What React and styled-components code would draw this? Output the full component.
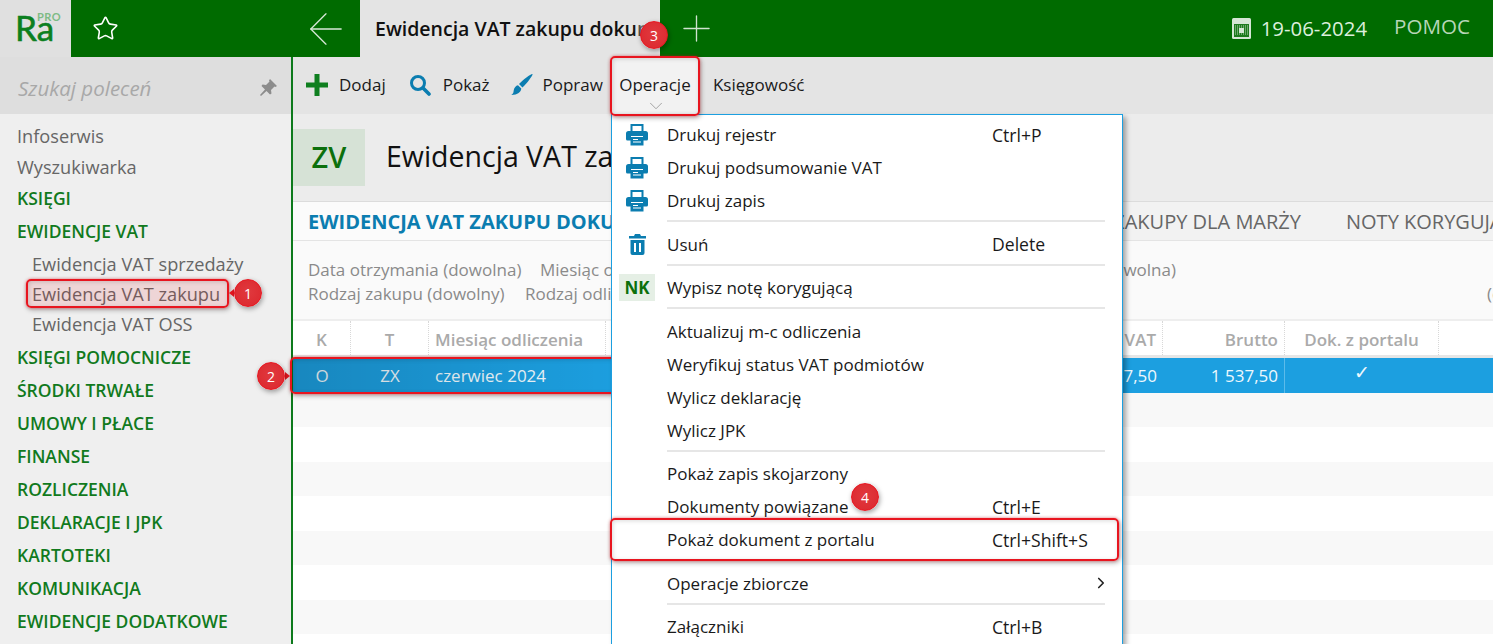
import React from "react";
import styled, { createGlobalStyle } from "styled-components";
import { ArrowLeft, Plus, Star, ChevronDown, ChevronRight } from "lucide-react";

const FONT = `"Open Sans", "Noto Sans", sans-serif`;
const GREEN = "#006b00";
const BLUE = "#0b7db0";
const RED = "#e8151f";
const COLS = "58px 78px 177px 557px 122px 154px 1fr";

const GlobalStyle = createGlobalStyle`
  html, body { margin: 0; padding: 0; background: #fff; }
  body { font-family: ${FONT}; overflow: hidden; }
  * { box-sizing: border-box; }
`;

const Page = styled.div`
  position: relative;
  width: 1493px;
  height: 644px;
  overflow: hidden;
`;

const TopBar = styled.header`
  display: flex;
  align-items: center;
  height: 57px;
  background: ${GREEN};
`;
const LogoCell = styled.div`
  position: relative;
  width: 71px;
  height: 57px;
  background: #e0e0e0;
`;
const LogoRa = styled.span`
  position: absolute;
  left: 15px;
  top: 7px;
  font-family: "Lato", sans-serif;
  font-size: 35px;
  line-height: 40px;
  letter-spacing: 0.2px;
  color: #0c7f1f;
  -webkit-text-stroke: 0.6px #0c7f1f;
`;
const LogoPro = styled.span`
  position: absolute;
  left: 37px;
  top: 12px;
  font-family: "Lato", sans-serif;
  font-size: 11px;
  line-height: 10px;
  font-weight: 700;
  letter-spacing: 0.5px;
  color: #7dbb85;
`;
const FavCell = styled.div`
  display: flex;
  align-items: center;
  width: 229px;
  padding-left: 21px;
  color: #fff;
`;
const BackCell = styled.div`
  display: flex;
  align-items: center;
  justify-content: center;
  width: 60px;
  padding-right: 8px;
  color: #d8e8d8;
`;
const ActiveTab = styled.div`
  position: relative;
  display: flex;
  align-items: center;
  width: 300px;
  height: 57px;
  padding: 0 0 1px 15px;
  background: #e4e4e4;
  overflow: hidden;
  white-space: nowrap;
  font-size: 19.5px;
  font-weight: 600;
  color: #111;
  &::after {
    content: "";
    position: absolute;
    right: 0;
    top: 0;
    bottom: 0;
    width: 26px;
    background: linear-gradient(90deg, rgba(228, 228, 228, 0), #e4e4e4 70%);
  }
`;
const AddCell = styled.div`
  display: flex;
  align-items: center;
  padding-left: 15px;
  color: #cfe3cf;
`;
const TopRight = styled.div`
  display: flex;
  align-items: center;
  margin-left: auto;
  padding-right: 23px;
  padding-bottom: 1px;
`;
const DateText = styled.span`
  margin-left: 10px;
  font-size: 20.4px;
  color: #dcefdc;
`;
const HelpText = styled.span`
  margin-left: 27px;
  padding-bottom: 4px;
  font-size: 20.6px;
  color: #b7d6b7;
`;

const Body = styled.div`
  display: grid;
  grid-template-columns: 293px 1fr;
  height: 587px;
`;

const Sidebar = styled.aside`
  background: #efefef;
  border-right: 2px solid #0d7a1c;
`;
const SearchBar = styled.div`
  display: flex;
  align-items: center;
  justify-content: space-between;
  height: 57px;
  padding: 4px 14px 0 18px;
  background: #dedede;
  font-size: 20.5px;
  font-style: italic;
  color: #a8a8a8;
`;
const Nav = styled.nav`
  padding-top: 6.5px;
`;
const NavLink = styled.div`
  display: flex;
  align-items: center;
  height: ${(p) => (p.$sub ? 30 : p.$group ? 33 : 31)}px;
  padding-left: ${(p) => (p.$sub ? 32 : 17)}px;
  padding-bottom: ${(p) => (p.$group ? 2 : 0)}px;
  font-size: ${(p) => (p.$group ? 17.5 : 18.2)}px;
  font-weight: ${(p) => (p.$group ? 600 : 400)};
  color: ${(p) => (p.$group ? "#117a1d" : "#666")};
`;
const SubGroup = styled.div`
  margin-bottom: 3px;
`;

const Main = styled.main`
  position: relative;
  overflow: hidden;
  background: #fff;
`;
const Toolbar = styled.div`
  display: flex;
  align-items: center;
  height: 57px;
  padding-left: 13px;
  background: #e4e4e4;
`;
const ToolButton = styled.div`
  display: flex;
  align-items: center;
  gap: ${(p) => p.$iconGap ?? 11}px;
  margin-right: ${(p) => p.$gap ?? 21}px;
  padding-bottom: 2px;
  font-size: 17px;
  color: #1a1a1a;
`;
const ToolMenuButton = styled.div`
  position: relative;
  flex-shrink: 0;
  width: 88px;
  height: 57px;
  margin-right: 14px;
  padding-bottom: 2px;
  display: flex;
  align-items: center;
  justify-content: center;
  background: #f2f2f2;
  font-size: 17px;
  color: #1a1a1a;
`;
const ToolChevron = styled.span`
  position: absolute;
  display: flex;
  left: 34px;
  bottom: -3px;
  color: #888;
`;
const TitleRow = styled.div`
  display: flex;
  align-items: center;
  gap: 21px;
  height: 88px;
  background: #ececec;
  border-bottom: 1px solid #dcdcdc;
`;
const Badge = styled.div`
  display: flex;
  align-items: center;
  justify-content: center;
  width: 72px;
  height: 57px;
  padding-bottom: 2px;
  background: #d6e2d6;
  color: #0c700c;
  font-size: 29px;
  font-weight: 600;
`;
const PageTitle = styled.h1`
  margin: 0 0 4px;
  font-size: 28.5px;
  font-weight: 400;
  color: #111;
  white-space: nowrap;
`;
const TabsRow = styled.div`
  display: grid;
  grid-template-columns: 748px 200px auto;
  column-gap: 45px;
  align-items: center;
  height: 39px;
  padding-left: 15px;
  background: linear-gradient(90deg, #fbfbfb 0 600px, #f2f2f2 600px);
  border-bottom: 1px solid #e4e4e4;
  white-space: nowrap;
  overflow: hidden;
`;
const TabLabel = styled.span`
  font-size: 20px;
  font-weight: ${(p) => (p.$active ? 700 : 400)};
  color: ${(p) => (p.$active ? BLUE : "#666")};
  text-align: ${(p) => (p.$end ? "right" : "left")};
`;
const Filters = styled.div`
  height: 80px;
  padding: 16px 0 0 15px;
  background: #fafafa;
  border-bottom: 2px solid #eeeeee;
`;
const FilterLine = styled.div`
  display: grid;
  grid-template-columns: ${(p) => p.$cols};
  height: 24px;
  align-items: center;
  font-size: 17px;
  color: #8a8a8a;
  white-space: nowrap;
  overflow: hidden;
`;
const FilterRight = styled.span`
  text-align: right;
`;
const Row = styled.div`
  display: grid;
  grid-template-columns: ${COLS};
  align-items: center;
  height: ${(p) => (p.$head ? 37 : 34.5)}px;
  background: ${(p) => (p.$selected ? "#1c9fe0" : p.$odd ? "#f8f8f8" : "#fff")};
  border-bottom: ${(p) => (p.$head ? "3px solid #e6e6e6" : "none")};
  color: ${(p) => (p.$selected ? "#eef8fd" : "#aaa")};
  font-size: 17px;
  font-weight: ${(p) => (p.$head ? 600 : 400)};
  white-space: nowrap;
`;
const Cell = styled.div`
  display: flex;
  align-items: center;
  height: 100%;
  padding: ${(p) => (p.$head ? "2px 6px 0" : "1px 6px 0")};
  justify-content: ${(p) => (p.$align === "center" ? "center" : p.$align === "right" ? "flex-end" : "flex-start")};
  border-right: ${(p) =>
    p.$head ? "1px dotted #d8d8d8" : p.$selected ? "1px solid #5cbbea" : "none"};
`;
const Tick = styled.span`
  font-family: "DejaVu Sans", sans-serif;
  font-size: 19px;
  margin-top: -7px;
`;

const Dropdown = styled.div`
  position: absolute;
  z-index: 2;
  left: 318px;
  top: 57px;
  width: 512px;
  height: 560px;
  padding-top: 3px;
  background: #fff;
  border: 1px solid #1c9fe0;
  box-shadow: 3px 3px 5px rgba(0, 0, 0, 0.35);
`;
const MenuItem = styled.div`
  display: grid;
  grid-template-columns: 55px 325px 1fr;
  align-items: center;
  height: 33px;
  padding-right: 16px;
  font-size: 17px;
  color: #1a1a1a;
  white-space: nowrap;
`;
const MenuIcon = styled.span`
  display: flex;
  justify-content: center;
  margin-left: 7px;
  width: 36px;
`;
const MenuNote = styled.span`
  display: flex;
  align-items: center;
  justify-content: center;
  width: 36px;
  height: 27px;
  margin-left: 7px;
  background: #e5efe5;
  color: #0c700c;
  font-size: 17px;
  font-weight: 700;
`;
const Shortcut = styled.span`
  font-size: 17.6px;
`;
const MenuArrow = styled.span`
  display: flex;
  justify-content: flex-end;
  margin-right: -4px;
  color: #222;
`;
const MenuRule = styled.div`
  height: 2px;
  margin: 3px 17px 5.5px 55px;
  background: #e6e6e6;
`;

const Outline = styled.div`
  position: absolute;
  z-index: ${(p) => (p.$under ? 1 : 3)};
  left: ${(p) => p.$x}px;
  top: ${(p) => p.$y}px;
  width: ${(p) => p.$w}px;
  height: ${(p) => p.$h}px;
  border: 2px solid ${RED};
  border-radius: 5px;
  background: ${(p) => p.$fill || "transparent"};
  box-shadow: 0 0 3px rgba(232, 21, 31, 0.5), 1px 2px 5px rgba(0, 0, 0, 0.3),
    inset 1px 1px 4px rgba(0, 0, 0, 0.15);
  pointer-events: none;
`;
const Marker = styled.div`
  position: absolute;
  z-index: 3;
  left: ${(p) => p.$x - 14}px;
  top: ${(p) => p.$y - 14}px;
  width: 28px;
  height: 28px;
  display: flex;
  align-items: center;
  justify-content: center;
  border-radius: 50%;
  border: 1.5px solid ${RED};
  background: radial-gradient(circle at 50% 45%, #e0393e, #dc272d);
  box-shadow: 1px 2px 5px rgba(0, 0, 0, 0.35);
  color: #fff;
  font-size: 14px;
`;
const MarkerTail = styled.span`
  position: absolute;
  z-index: 3;
  left: ${(p) => p.$x}px;
  top: ${(p) => p.$y - 4}px;
  width: 0;
  height: 0;
  border-top: 4px solid transparent;
  border-bottom: 4px solid transparent;
  border-${(p) => (p.$dir === "left" ? "right" : "left")}: 5px solid ${RED};
`;

const AddIcon = () => (
  <svg width="22" height="22" viewBox="0 0 22 22" fill="#0f7f1f">
    <path d="M8.500 0h5v8.500H22v5h-8.500V22h-5v-8.500H0v-5h8.500z" />
  </svg>
);
const PrinterIcon = () => (
  <svg width="22" height="22" viewBox="0 0 22 22" fill="#0b7db0">
    <path d="M4.500 0h13v8h-2V2h-9v6h-2z" />
    <path d="M2.500 7h17A2.500 2.500 0 0 1 22 9.500V15a1.500 1.500 0 0 1-1.500 1.500H17V12H5v4.500H1.500A1.500 1.500 0 0 1 0 15V9.500A2.500 2.500 0 0 1 2.500 7z" />
    <path d="M4.500 13h13v8.500h-13z" />
    <path d="M7 15h5v1H7zM7 17.500h8v1H7z" fill="#fff" />
  </svg>
);
const TrashIcon = () => (
  <svg width="19" height="22" viewBox="0 0 19 22" fill="#0b7db0">
    <path d="M1 3h5l1-2h5l1 2h5v2.500H1z" />
    <path d="M2.500 7h14v13a2 2 0 0 1-2 2h-10a2 2 0 0 1-2-2z" />
    <path d="M6 10h2v9H6zM11 10h2v9h-2z" fill="#fff" />
  </svg>
);
const SearchIcon = () => (
  <svg width="22" height="22" viewBox="0 0 22 22" fill="none" stroke="#0b7db0">
    <circle cx="9" cy="9" r="6.500" strokeWidth="3" />
    <path d="M14 14l6 6" strokeWidth="3.600" strokeLinecap="round" />
  </svg>
);
const BrushIcon = () => (
  <svg width="23" height="23" viewBox="1 0 22 23" fill="#0b7db0">
    <path d="M22 1c.8.800-5.500 9.500-10 13.500L8.500 11C12.500 6.500 21.200.2 22 1z" />
    <path d="M7.500 12.200l3.300 3.300c-.3 3.500-3.500 6.500-10 6.500 2.500-1.500 2-3 2.500-5 .5-2.500 2-4.300 4.200-4.800z" />
  </svg>
);
const PinIcon = () => (
  <svg width="18" height="18" viewBox="0 0 18 18" fill="#8c8c8c">
    <path d="M11 0l7 7-1.500 1-1-.500L12 11l.5 3.500-1.500 1L7.500 12 2 17l-1-1 5-5.500L2.500 7l1-1.500L7 6l3.500-3.500-.5-1z" />
  </svg>
);
const CalendarIcon = () => (
  <svg width="19" height="21" viewBox="0 0 19 21">
    <rect x="0" y="0" width="19" height="21" rx="1.500" fill="#d5e6d5" />
    <rect x="2" y="6" width="15" height="13" fill="#1d7a1d" />
    <path d="M3 8h13M3 10h13M3 12h13M3 14h13M3 16h13" stroke="#bcd8bc" strokeWidth="1" strokeDasharray="1 1" />
    <rect x="7" y="10" width="5" height="5" fill="#d5e6d5" />
  </svg>
);

const sideTop = ["Infoserwis", "Wyszukiwarka"];
const sideAfter = [
  "KSIĘGI POMOCNICZE",
  "ŚRODKI TRWAŁE",
  "UMOWY I PŁACE",
  "FINANSE",
  "ROZLICZENIA",
  "DEKLARACJE I JPK",
  "KARTOTEKI",
  "KOMUNIKACJA",
  "EWIDENCJE DODATKOWE",
];
const vatRegisters = ["Ewidencja VAT sprzedaży", "Ewidencja VAT zakupu", "Ewidencja VAT OSS"];

const menu = [
  [
    { label: "Drukuj rejestr", keys: "Ctrl+P", icon: <PrinterIcon /> },
    { label: "Drukuj podsumowanie VAT", icon: <PrinterIcon /> },
    { label: "Drukuj zapis", icon: <PrinterIcon /> },
  ],
  [{ label: "Usuń", keys: "Delete", icon: <TrashIcon /> }],
  [{ label: "Wypisz notę korygującą", note: "NK" }],
  [
    { label: "Aktualizuj m-c odliczenia" },
    { label: "Weryfikuj status VAT podmiotów" },
    { label: "Wylicz deklarację" },
    { label: "Wylicz JPK" },
  ],
  [
    { label: "Pokaż zapis skojarzony" },
    { label: "Dokumenty powiązane", keys: "Ctrl+E" },
    { label: "Pokaż dokument z portalu", keys: "Ctrl+Shift+S" },
  ],
  [{ label: "Operacje zbiorcze", more: true }],
  [{ label: "Załączniki", keys: "Ctrl+B" }],
];

const headCells = [
  { text: "K", align: "center" },
  { text: "T", align: "center" },
  { text: "Miesiąc odliczenia" },
  { text: "Kwota VAT", align: "right" },
  { text: "Brutto", align: "right" },
  { text: "Dok. z portalu", align: "center" },
];

export default function App() {
  return (
    <Page>
      <GlobalStyle />
      <TopBar>
        <LogoCell>
          <LogoRa>Ra</LogoRa>
          <LogoPro>PRO</LogoPro>
        </LogoCell>
        <FavCell>
          <Star size={27} strokeWidth={1.4} />
        </FavCell>
        <BackCell>
          <ArrowLeft size={54} strokeWidth={0.6} />
        </BackCell>
        <ActiveTab>Ewidencja VAT zakupu dokumenty</ActiveTab>
        <AddCell>
          <Plus size={43} strokeWidth={0.75} />
        </AddCell>
        <TopRight>
          <CalendarIcon />
          <DateText>19-06-2024</DateText>
          <HelpText>POMOC</HelpText>
        </TopRight>
      </TopBar>

      <Body>
        <Sidebar>
          <SearchBar>
            Szukaj poleceń
            <PinIcon />
          </SearchBar>
          <Nav>
            {sideTop.map((s) => (
              <NavLink key={s}>{s}</NavLink>
            ))}
            <NavLink $group>KSIĘGI</NavLink>
            <NavLink $group>EWIDENCJE VAT</NavLink>
            <SubGroup>
              {vatRegisters.map((s) => (
                <NavLink key={s} $sub>
                  {s}
                </NavLink>
              ))}
            </SubGroup>
            {sideAfter.map((s) => (
              <NavLink key={s} $group>
                {s}
              </NavLink>
            ))}
          </Nav>
        </Sidebar>

        <Main>
          <Toolbar>
            <ToolButton $gap={23}>
              <AddIcon />
              Dodaj
            </ToolButton>
            <ToolButton $gap={21} $iconGap={12}>
              <SearchIcon />
              Pokaż
            </ToolButton>
            <ToolButton $gap={8} $iconGap={9}>
              <BrushIcon />
              Popraw
            </ToolButton>
            <ToolMenuButton>
              Operacje
              <ToolChevron>
                <ChevronDown size={22} strokeWidth={0.8} />
              </ToolChevron>
            </ToolMenuButton>
            <ToolButton>Księgowość</ToolButton>
          </Toolbar>
          <TitleRow>
            <Badge>ZV</Badge>
            <PageTitle>Ewidencja VAT zakupu dokumenty</PageTitle>
          </TitleRow>
          <TabsRow>
            <TabLabel $active>EWIDENCJA VAT ZAKUPU DOKUMENTY</TabLabel>
            <TabLabel $end>ZAKUPY DLA MARŻY</TabLabel>
            <TabLabel>NOTY KORYGUJĄCE</TabLabel>
          </TabsRow>
          <Filters>
            <FilterLine $cols="232px 500px 136px">
              <span>Data otrzymania (dowolna)</span>
              <span>Miesiąc odliczenia (dowolny)</span>
              <FilterRight>Data (dowolna)</FilterRight>
            </FilterLine>
            <FilterLine $cols="217px 962px auto">
              <span>Rodzaj zakupu (dowolny)</span>
              <span>Rodzaj odliczenia (dowolny)</span>
              <span>(dowolny)</span>
            </FilterLine>
          </Filters>
          <Row $head>
            {headCells.map((c) => (
              <Cell key={c.text} $head $align={c.align}>
                {c.text}
              </Cell>
            ))}
            <Cell />
          </Row>
          <Row $selected>
            <Cell $align="center">O</Cell>
            <Cell $align="center">ZX</Cell>
            <Cell>czerwiec 2024</Cell>
            <Cell $align="right">1 537,50</Cell>
            <Cell $align="right" $selected>1 537,50</Cell>
            <Cell $align="center">
              <Tick>✓</Tick>
            </Cell>
            <Cell />
          </Row>
          {Array.from({ length: 7 }, (_, i) => (
            <Row key={i} $odd={i % 2 === 0} />
          ))}

          <Dropdown>
            {menu.map((group, g) => (
              <React.Fragment key={g}>
                {g > 0 && <MenuRule />}
                {group.map((item) => (
                  <MenuItem key={item.label}>
                    {item.note ? <MenuNote>{item.note}</MenuNote> : <MenuIcon>{item.icon}</MenuIcon>}
                    <span>{item.label}</span>
                    {item.more ? (
                      <MenuArrow>
                        <ChevronRight size={18} strokeWidth={2.2} />
                      </MenuArrow>
                    ) : (
                      <Shortcut>{item.keys}</Shortcut>
                    )}
                  </MenuItem>
                ))}
              </React.Fragment>
            ))}
          </Dropdown>
        </Main>
      </Body>

      <Outline $x={26} $y={279} $w={203} $h={29} $fill="rgba(232,21,31,0.12)" />
      <Outline
        $under
        $x={290}
        $y={357}
        $w={400}
        $h={37}
        $fill="linear-gradient(90deg, rgba(0,0,0,0.15), rgba(0,0,0,0) 85%)"
      />
      <Outline $x={610} $y={56} $w={90} $h={60} />
      <Outline $x={610} $y={518} $w={509} $h={43} />
      <MarkerTail $x={229} $y={293} $dir="left" />
      <MarkerTail $x={285} $y={376} $dir="right" />
      <Marker $x={248} $y={293}>1</Marker>
      <Marker $x={271} $y={376}>2</Marker>
      <Marker $x={654} $y={35}>3</Marker>
      <Marker $x={865} $y={497}>4</Marker>
    </Page>
  );
}
